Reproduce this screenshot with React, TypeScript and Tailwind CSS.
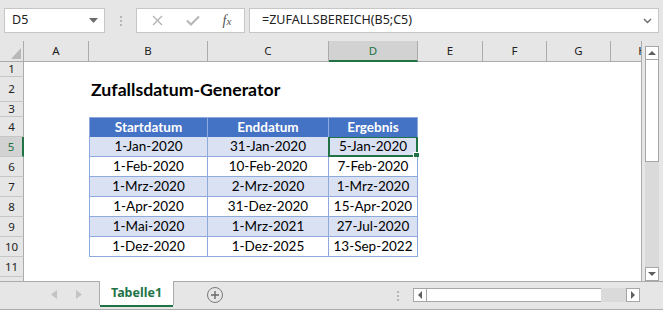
import React from "react";

const ui = { fontFamily: '"Noto Sans", "Open Sans", sans-serif' };
const cellFont = { fontFamily: 'Lato, "Noto Sans", sans-serif' };

type Col = { l: string; w: string };
const cols: Col[] = [
  { l: "A", w: "w-[65px]" },
  { l: "B", w: "w-[119px]" },
  { l: "C", w: "w-[121px]" },
  { l: "D", w: "w-[89px]" },
  { l: "E", w: "w-[65px]" },
  { l: "F", w: "w-[64px]" },
  { l: "G", w: "w-[64px]" },
  { l: "H", w: "w-[64px]" },
];

const data = [
  ["1-Jan-2020", "31-Jan-2020", "5-Jan-2020"],
  ["1-Feb-2020", "10-Feb-2020", "7-Feb-2020"],
  ["1-Mrz-2020", "2-Mrz-2020", "1-Mrz-2020"],
  ["1-Apr-2020", "31-Dez-2020", "15-Apr-2020"],
  ["1-Mai-2020", "1-Mrz-2021", "27-Jul-2020"],
  ["1-Dez-2020", "1-Dez-2025", "13-Sep-2022"],
];

function RowHeader({ n, h, active }: { n: string; h: string; active?: boolean }) {
  return (
    <div
      className={`${h} w-[24px] shrink-0 flex items-center justify-center text-[11.5px] leading-none border-b border-[#c6c6c6] ${
        active
          ? "bg-[#d2d2d2] border-r-2 border-r-[#217346] text-[#217346]"
          : "bg-[#e6e6e6] border-r border-r-[#ababab] text-[#222]"
      }`}
      style={ui}
    >
      {n}
    </div>
  );
}

function EmptyCells({ from }: { from: number }) {
  return (
    <>
      {cols.slice(from).map((c) => (
        <div key={c.l} className={`${c.w} shrink-0`} />
      ))}
    </>
  );
}

function TableRow({ vals, band, n }: { vals: string[]; band: boolean; n: number }) {
  const bg = band ? "bg-[#d9e1f2]" : "bg-white";
  return (
    <div className="flex h-[20px]">
      <RowHeader n={String(n)} h="h-[20px]" active={n === 5} />
      <div className="flex w-[617px] overflow-hidden bg-white text-[13.5px] text-black" style={cellFont}>
        <div className="w-[65px] shrink-0" />
        <div className={`w-[119px] shrink-0 ${bg} border-l border-r border-b border-[#8ea9db] flex items-center justify-center`}>
          {vals[0]}
        </div>
        <div className={`w-[121px] shrink-0 ${bg} border-r border-b border-[#8ea9db] flex items-center justify-center`}>
          {vals[1]}
        </div>
        <div className={`relative w-[89px] shrink-0 ${bg} border-r border-b border-[#8ea9db] flex items-center justify-center`}>
          {vals[2]}
          {n === 5 && (
            <>
              <div className="absolute -left-[1px] -top-[1px] -right-[1px] -bottom-[1px] border-2 border-[#217346]" />
              <div className="absolute -right-[3px] -bottom-[3px] w-[5px] h-[5px] bg-[#217346] border border-white box-content" />
            </>
          )}
        </div>
        <EmptyCells from={4} />
      </div>
    </div>
  );
}

function ScrollBtn({ dir }: { dir: "up" | "down" | "left" | "right" }) {
  const pts =
    dir === "up"
      ? "3,9 11,9 7,5"
      : dir === "down"
      ? "3,5 11,5 7,9"
      : dir === "left"
      ? "9,3 9,11 5,7"
      : "5,3 5,11 9,7";
  return (
    <div className="w-[14px] h-[14px] shrink-0 bg-white border border-[#a6a6a6] flex items-center justify-center">
      <svg width="12" height="12" viewBox="1 1 12 12">
        <polygon points={pts} fill="#5f5f5f" />
      </svg>
    </div>
  );
}

function Dots() {
  return (
    <div className="flex flex-col gap-[2px]">
      <div className="w-[2px] h-[2px] bg-[#b5b5b5]" />
      <div className="w-[2px] h-[2px] bg-[#b5b5b5]" />
      <div className="w-[2px] h-[2px] bg-[#b5b5b5]" />
    </div>
  );
}

export default function App() {
  return (
    <div className="w-[663px] h-[310px] bg-[#e6e6e6] flex flex-col overflow-hidden select-none">
      {/* Formula bar */}
      <div className="h-[41px] shrink-0 flex items-start pt-[8px] pl-[4px]">
        <div className="w-[101px] h-[25px] bg-white border border-[#c6c6c6] flex items-center justify-between pl-[7px] pr-[6px]">
          <span className="text-[12.5px] text-[#222]" style={ui}>D5</span>
          <svg width="9" height="5" viewBox="0 0 9 5">
            <polygon points="0,0 9,0 4.5,5" fill="#6b6b6b" />
          </svg>
        </div>
        <div className="w-[31px] h-[25px] flex items-center justify-center">
          <Dots />
        </div>
        <div className="w-[109px] h-[25px] bg-white border border-[#c6c6c6] flex items-center">
          <div className="w-[38px] flex justify-center pl-[2px]">
            <svg width="11" height="11" viewBox="0 0 11 11">
              <path d="M1 1 L10 10 M10 1 L1 10" stroke="#b5b5b5" strokeWidth="1.4" />
            </svg>
          </div>
          <div className="w-[36px] flex justify-center">
            <svg width="14" height="11" viewBox="0 0 14 11">
              <path d="M1 5.5 L5 9.5 L13 1.5" stroke="#b5b5b5" strokeWidth="2" fill="none" />
            </svg>
          </div>
          <div className="w-[32px] flex justify-center">
            <span
              className="italic text-[14px] text-[#555] leading-none"
              style={{ fontFamily: '"Liberation Serif", "DejaVu Serif", serif' }}
            >
              f<span className="text-[11px]">x</span>
            </span>
          </div>
        </div>
        <div className="w-[410px] h-[25px] ml-[4px] bg-white border border-[#c6c6c6] flex items-center justify-between pl-[12px] pr-[6px]">
          <span className="text-[12.5px] text-[#222]" style={ui}>=ZUFALLSBEREICH(B5;C5)</span>
          <svg width="9" height="6" viewBox="0 0 9 6">
            <path d="M1 1 L4.5 4.5 L8 1" stroke="#6b6b6b" strokeWidth="1.4" fill="none" />
          </svg>
        </div>
      </div>

      {/* Sheet + vertical scroll */}
      <div className="flex h-[240px] shrink-0">
        <div className="w-[641px] flex flex-col border-r border-[#ababab] box-content">
          {/* Column headers */}
          <div className="flex h-[21px]">
            <div className="w-[24px] h-[21px] shrink-0 border-r border-b border-[#ababab] flex items-end justify-end pr-[2px] pb-[2px]">
              <svg width="10" height="11" viewBox="0 0 10 11">
                <polygon points="10,0 10,11 0,11" fill="#b8b8b8" />
              </svg>
            </div>
            <div className="flex w-[617px] overflow-hidden">
              {cols.map((c) => (
                <div
                  key={c.l}
                  className={`${c.w} shrink-0 h-[21px] flex items-center justify-center text-[11.5px] border-r border-[#ababab] ${
                    c.l === "D"
                      ? "bg-[#d2d2d2] border-b-2 border-b-[#217346] text-[#217346]"
                      : "bg-[#e6e6e6] border-b border-b-[#ababab] text-[#222]"
                  }`}
                  style={ui}
                >
                  {c.l}
                </div>
              ))}
            </div>
          </div>

          {/* Row 1 */}
          <div className="flex h-[15px]">
            <RowHeader n="1" h="h-[15px]" />
            <div className="w-[617px] bg-white" />
          </div>
          {/* Row 2 */}
          <div className="flex h-[25px]">
            <RowHeader n="2" h="h-[25px]" />
            <div className="flex w-[617px] bg-white">
              <div className="w-[65px] shrink-0" />
              <div
                className="pl-[2px] pb-[3px] flex items-end whitespace-nowrap font-bold text-[17.7px] leading-none text-black"
                style={cellFont}
              >
                Zufallsdatum-Generator
              </div>
            </div>
          </div>
          {/* Row 3 */}
          <div className="flex h-[15px]">
            <RowHeader n="3" h="h-[15px]" />
            <div className="w-[617px] bg-white" />
          </div>
          {/* Row 4 header */}
          <div className="flex h-[20px]">
            <RowHeader n="4" h="h-[20px]" />
            <div className="flex w-[617px] overflow-hidden bg-white text-[13.5px] font-bold text-white" style={cellFont}>
              <div className="w-[65px] shrink-0" />
              <div className="w-[119px] shrink-0 bg-[#4472c4] border-l border-r border-t border-[#8ea9db] flex items-center justify-center">
                Startdatum
              </div>
              <div className="w-[121px] shrink-0 bg-[#4472c4] border-r border-t border-[#8ea9db] flex items-center justify-center">
                Enddatum
              </div>
              <div className="w-[89px] shrink-0 bg-[#4472c4] border-r border-t border-[#8ea9db] flex items-center justify-center">
                Ergebnis
              </div>
              <EmptyCells from={4} />
            </div>
          </div>
          {data.map((r, i) => (
            <TableRow key={i} vals={r} band={i % 2 === 0} n={i + 5} />
          ))}
          {/* Row 11 */}
          <div className="flex h-[20px]">
            <RowHeader n="11" h="h-[20px]" />
            <div className="w-[617px] bg-white" />
          </div>
          {/* Row 12 partial */}
          <div className="flex h-[4px] overflow-hidden">
            <div className="w-[24px] h-[4px] bg-[#e6e6e6] border-r border-[#ababab]" />
            <div className="w-[617px] bg-white" />
          </div>
        </div>
        {/* Vertical scrollbar */}
        <div className="w-[21px] flex flex-col pt-[5px] pl-[3px]">
          <ScrollBtn dir="up" />
          <div className="w-[14px] h-[102px] bg-white border border-[#a6a6a6] border-t-0" />
          <div className="w-[14px] flex-1 bg-[#dadada]" />
          <ScrollBtn dir="down" />
        </div>
      </div>

      {/* Sheet tabs bar */}
      <div className="flex-1 flex items-start border-t border-[#ababab] border-b">
        <div className="w-[99px] h-[24px] flex items-center">
          <div className="w-[57px] flex justify-end">
            <svg width="6" height="9" viewBox="0 0 6 9">
              <polygon points="6,0 6,9 0,4.5" fill="#c4c4c4" />
            </svg>
          </div>
          <div className="w-[25px] flex justify-end">
            <svg width="6" height="9" viewBox="0 0 6 9">
              <polygon points="0,0 0,9 6,4.5" fill="#c4c4c4" />
            </svg>
          </div>
        </div>
        <div className="relative -mt-[1px] w-[75px] h-[24px] bg-white border-l border-r border-[#ababab] flex items-center justify-center">
          <span className="text-[12.5px] font-bold text-[#217346]" style={ui}>Tabelle1</span>
          <div className="absolute left-0 right-0 bottom-[-2px] h-[2px] bg-[#217346]" />
        </div>
        <div className="ml-[33px] mt-[5px] w-[16px] h-[16px] rounded-full border border-[#7a7a7a] flex items-center justify-center">
          <svg width="10" height="10" viewBox="0 0 10 10">
            <path d="M5 1 V9 M1 5 H9" stroke="#6a6a6a" strokeWidth="1.4" />
          </svg>
        </div>
        <div className="ml-[174px] mt-[9px]">
          <Dots />
        </div>
        <div className="ml-[14px] mt-[6px] flex h-[14px]">
          <ScrollBtn dir="left" />
          <div className="w-[174px] h-[14px] bg-white border-t border-b border-[#a6a6a6]" />
          <div className="w-[25px] h-[14px] bg-[#dadada]" />
          <ScrollBtn dir="right" />
        </div>
      </div>
    </div>
  );
}
